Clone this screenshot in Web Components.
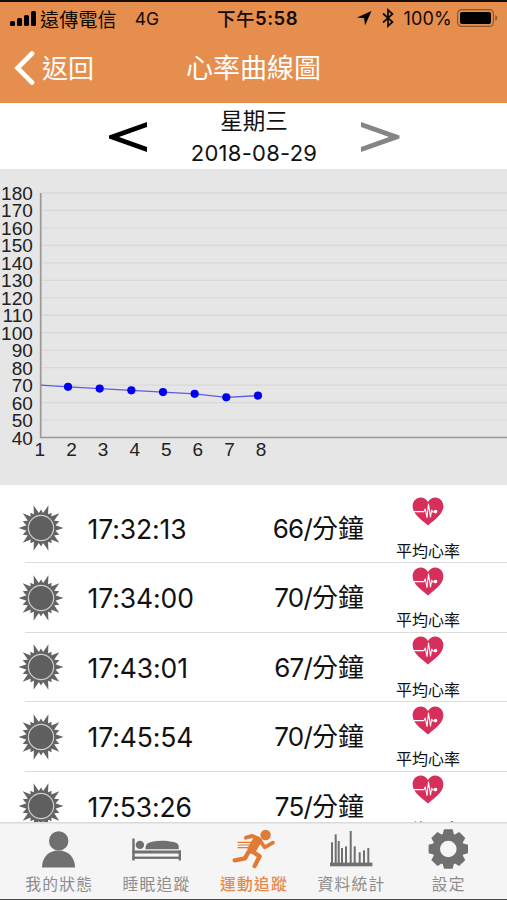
<!DOCTYPE html>
<html lang="zh-Hant">
<head>
<meta charset="utf-8">
<meta name="viewport" content="width=device-width, initial-scale=1">
<title>心率曲線圖</title>
<style>
  html, body { margin: 0; height: 100%; }
  body { overflow: hidden; background: #fff; font-family: Inter, "Noto Sans CJK TC", sans-serif; }
</style>
</head>
<body>
<heart-rate-page></heart-rate-page>

<script>
// create an element class from a markup function
function define(name, tmpl) {
  customElements.define(name, class extends HTMLElement {
    connectedCallback() {
      if (this.shadowRoot) return
      this.attachShadow({ mode: 'open' }).innerHTML = tmpl(this)
    }
  })
}

const points = (list) => list.map(p => p.map(n => n.toFixed(2)).join(',')).join(' ')
const polar = (cx, cy, r, deg) => [cx + r * Math.cos(deg * Math.PI / 180), cy - r * Math.sin(deg * Math.PI / 180)]

// ---- status bar ----
define('status-bar', () => `
  <style>
    :host { display: grid; grid-template-columns: 207px 1fr auto; align-items: center; height: 32px; padding: 0 9px 0 10px; box-sizing: border-box; color: #110a05; font-size: 17px; white-space: nowrap; }
    div { display: flex; align-items: center; }
    svg { display: block; flex: none; }
    .carrier { margin: 0 18px 0 4px; letter-spacing: 0.2px; font-size: 19px; }
    .net { font-size: 17.5px; }
    .time { font-weight: 600; font-size: 18.5px; letter-spacing: 0.5px; }
    .time span { font-weight: 500; }
    .pct { margin: 0 5px 0 9px; font-size: 18px; letter-spacing: 0.2px; }
  </style>
  <div>
    <svg width="26" height="17" viewBox="0 0 26 17">
      <rect x="0" y="11" width="5" height="5" rx="1.5"/><rect x="7" y="8" width="5" height="8" rx="1.5"/>
      <rect x="14" y="5" width="5" height="11" rx="1.5"/><rect x="21" y="1" width="5" height="15" rx="1.5"/>
    </svg>
    <span class="carrier">遠傳電信</span><span class="net">4G</span>
  </div>
  <div class="time"><span>下午</span>5:58</div>
  <div>
    <svg width="15" height="16" viewBox="0 0 15 16"><path d="M14.5 1 8 15.5 7.2 8.3 0 7.6z"/></svg>
    <svg style="margin-left:10px" width="12" height="20" viewBox="0 0 12 20"><path d="M1 5.5 10.5 14 6 18V2l4.5 4L1 14.5" fill="none" stroke="#110a05" stroke-width="1.7"/></svg>
    <span class="pct">100%</span>
    <svg width="41" height="18" viewBox="0 0 41 18">
      <rect x=".6" y=".6" width="35.8" height="16.8" rx="4" fill="none" stroke="#8b582f" stroke-width="1.2"/>
      <rect x="3" y="3" width="31" height="12" rx="2" fill="#000"/>
      <path d="M38.3 6v6q2-1 2-3t-2-3z" fill="#8b582f"/>
    </svg>
  </div>
`)

// ---- title bar ----
define('nav-bar', () => `
  <style>
    :host { display: grid; grid-template-columns: 1fr auto 1fr; align-items: center; height: 68px; padding: 0 14px; color: #fff; font-size: 27px; line-height: 68px; }
    .back { display: flex; align-items: center; gap: 7px; font-size: 26px; }
    .back svg { margin-top: -2px; }
    .text { padding-top: 1px; }
  </style>
  <div class="back">
    <svg width="21" height="34" viewBox="0 0 21 34"><path d="M18 2.5 3.5 17 18 31.5" fill="none" stroke="#fff" stroke-width="4.6" stroke-linecap="round"/></svg>
    <span class="text"><slot name="back"></slot></span>
  </div>
  <div class="text"><slot></slot></div>
`)

// ---- previous / next day ----
define('date-picker', () => `
  <style>
    :host { display: grid; grid-template-columns: 39px 1fr 39px; align-items: center; height: 66px; padding: 0 107px 0 108px; background: #fff; color: #111; }
    svg { display: block; padding-top: 2px; }
    .mid { text-align: center; }
    .day { font-size: 22.5px; line-height: 33px; }
    .date { font-size: 22px; line-height: 32px; letter-spacing: 0.25px; }
  </style>
  <svg width="39" height="32" viewBox="0 0 39 32"><path d="M39 1V6L11 16l28 10v5L1 17.6V14.4z" fill="#000"/></svg>
  <div class="mid">
    <div class="day"><slot name="day"></slot></div>
    <div class="date"><slot name="date"></slot></div>
  </div>
  <svg width="39" height="32" viewBox="0 0 39 32"><path d="M0 1V6L28 16 0 26v5L38.5 17.6V14.4z" fill="#858585"/></svg>
`)

// ---- line chart, values="70,69,..." ----
define('rate-chart', (el) => {
  const values = el.getAttribute('values').split(',').map(Number)
  const y = v => 268.5 - (v - 40) * 1.7464
  const x = i => 36.4 + i * 31.65
  let grid = '', labels = '', dots = ''
  for (let v = 180; v >= 40; v -= 10) {
    if (v > 40) grid += `<line x1="42" x2="507" y1="${y(v)}" y2="${y(v)}"/>`
    labels += `<text x="32.8" y="${y(v) + 7}" text-anchor="end">${v}</text>`
  }
  values.forEach((v, i) => {
    labels += `<text x="${39.9 + i * 31.6}" y="287" text-anchor="middle">${i + 1}</text>`
    if (i > 0) dots += `<circle cx="${x(i)}" cy="${y(v)}" r="4.1"/>`
  })
  const line = values.map((v, i) => [i ? x(i) : 41, y(v)])
  return `
  <style>
    :host { display: block; height: 316px; background: #e6e6e6; }
    svg { display: block; }
    text { font: 19px "Liberation Sans", sans-serif; fill: #222; }
  </style>
  <svg width="507" height="316" viewBox="0 0 507 316">
    <g stroke="#d8d8d8" stroke-width="1.3">${grid}</g>
    <path d="M40.7 24V268.5H507" fill="none" stroke="#999" stroke-width="1.7"/>
    ${labels}
    <polyline points="${points(line)}" fill="none" stroke="#5c5ce6" stroke-width="1.4"/>
    <g fill="#0000f0">${dots}</g>
  </svg>`
})

// ---- icons ----
define('sun-icon', () => {
  // angle and length of every ray, first quadrant then mirrored
  const quarter = [[0, 22.5], [20, 19.5], [39, 23.5], [55, 18.5], [72, 24]]
  let rays = []
  quarter.forEach(([a, r]) => {
    rays.push([a, r], [180 - a, r])
    if (a) rays.push([-a, r], [180 + a, r])
  })
  rays.push([90, 18.5], [270, 18.5])
  const spikes = rays.map(([a, r]) =>
    `<polygon points="${points([polar(24, 24, 14, a - 12), polar(24, 24, r, a), polar(24, 24, 14, a + 12)])}"/>`).join('')
  return `
  <style>:host { display: block; } svg { display: block; }</style>
  <svg width="48" height="48" viewBox="0 0 48 48" fill="#636363">
    ${spikes}<circle cx="24" cy="24" r="14.5"/>
    <circle cx="24" cy="24" r="12.6" fill="#605f5f" stroke="#cfcfcf" stroke-width="1.2"/>
  </svg>`
})

define('heart-icon', () => `
  <style>:host { display: block; } svg { display: block; }</style>
  <svg width="32" height="29" viewBox="0 0 32 29">
    <path d="M16 28.5C12 24.5.6 18 .6 9.2.6 4 4.2.5 8.6.5c3.3 0 6 1.7 7.4 4.6C17.4 2.2 20.1.5 23.4.5c4.4 0 8 3.5 8 8.7C31.4 18 20 24.5 16 28.5z" fill="#d62f5c"/>
    <path d="M2 14.6h10l1.3-2.6 1.7 8.5 1.5-13.5 2 13 1.2-7 1 2h3" fill="none" stroke="#fff" stroke-width="1.1" stroke-linejoin="round"/>
    <circle cx="23.5" cy="14.6" r="1.8" fill="#fff"/>
  </svg>
`)

// ---- one measurement ----
define('rate-row', (el) => `
  <style>
    :host { display: grid; grid-template-columns: 71px 149.5px 127px 128px; align-items: center; height: 69.5px; box-sizing: border-box; padding-left: 16.5px; color: #111; font-size: 26.5px; white-space: nowrap; line-height: 30px;
      background: linear-gradient(#dcdcdc, #dcdcdc) 25px 100% / 100% 1.2px no-repeat; }
    sun-icon { margin-top: -1px; }
    .time { letter-spacing: -0.1px; }
    .rate { text-align: right; font-size: 26px; }
    .num { letter-spacing: -0.8px; }
    .avg { display: flex; flex-direction: column; align-items: center; font-size: 16px; line-height: 20px; gap: 14.5px; }
  </style>
  <sun-icon></sun-icon>
  <div class="time">${el.getAttribute('time')}</div>
  <div class="rate"><span class="num">${el.getAttribute('rate')}/</span>分鐘</div>
  <div class="avg"><heart-icon></heart-icon><span><slot></slot></span></div>
`)

// ---- tab bar ----
const bars = [[237, 247], [248, 223], [257, 243], [267, 264], [279, 259], [293, 213], [305, 259], [320, 277], [333, 271], [346, 264]]
const teeth = [0, 45, 90, 135, 180, 225, 270, 315]
const icons = {
  user: `<circle cx="29.7" cy="18.9" r="9.7"/><path d="M13 45.5C13 35 20 28.5 29.5 28.5S46 35 46 45.5z"/>`,
  bed: `<rect x="6.3" y="16.5" width="2.4" height="22"/><circle cx="13.9" cy="22.9" r="4.2"/>
    <path d="M19.6 27.2C19 22 22 20.5 27 19.5c7-1.3 16-.8 21.5.8 4 1.2 4.5 3.2 4.2 6.9z"/>
    <rect x="6.3" y="28.5" width="48.7" height="3"/><rect x="6.3" y="34.6" width="48.7" height="2.3"/><rect x="52.6" y="28.5" width="2.4" height="10"/>`,
  run: `<g transform="translate(1.3 0) scale(.3333)"><circle cx="124" cy="39" r="15.5"/>
    <g fill="none" stroke="currentColor" stroke-linecap="round" stroke-linejoin="round">
      <path d="M65 47 84 42 108 54" stroke-width="12"/><path d="M98 56 83 82" stroke-width="27"/>
      <path d="M106 54 121 76 146 62" stroke-width="11"/><path d="M82 87 106 103 91 132" stroke-width="13"/>
      <path d="M72 91 62 109 31 115" stroke-width="13"/><path d="M41 61H82M41 69H76M41 77H70" stroke-width="3.5"/>
    </g></g>`,
  stats: bars.map(([x, y]) => `<rect x="${(x / 3 - 69).toFixed(1)}" y="${(y / 3 - 62).toFixed(1)}" width="2" height="${(103 - y / 3).toFixed(1)}"/>`).join('') + `<rect x="9" y="40.6" width="42.4" height="3.7"/>`,
  gear: `<g transform="translate(30.3 27)">${teeth.map(a => `<path transform="rotate(${a})" d="M-5.8-14-4.3-19.7H4.3L5.8-14z"/>`).join('')}
    <path fill-rule="evenodd" d="M-15.8 0a15.8 15.8 0 1 0 31.6 0a15.8 15.8 0 1 0-31.6 0zM-8.3 0a8.3 8.3 0 1 0 16.6 0a8.3 8.3 0 1 0-16.6 0z"/></g>`
}

define('tab-item', (el) => `
  <style>
    :host { display: flex; flex-direction: column; align-items: center; color: #707070; }
    :host([active]) { color: #e07a35; }
    svg { display: block; }
    span { font-size: 15.8px; line-height: 25px; letter-spacing: 1.2px; margin-right: -1px; color: #8c8c8c; }
    :host([active]) span { color: #e38a4e; font-weight: 500; }
  </style>
  <svg width="60" height="50" viewBox="0 0 60 50" fill="currentColor">${icons[el.getAttribute('icon')]}</svg>
  <span><slot></slot></span>
`)

define('tab-bar', () => `
  <style>
    :host { display: grid; grid-template-columns: repeat(5, 1fr); height: 77px; padding: 0 10px; background: #f5f5f5; box-shadow: inset 0 1.5px #d9d9d9; border-bottom: 1px solid #444; }
  </style>
  <slot></slot>
`)

// ---- page ----
const rows = [['17:32:13', 66], ['17:34:00', 70], ['17:43:01', 67], ['17:45:54', 70], ['17:53:26', 75]]

define('heart-rate-page', () => `
  <style>
    :host { display: flex; flex-direction: column; width: 507px; height: 900px; overflow: hidden; }
    header { background: #e58e4e; border-top: 2px solid #150b04; height: 101px; flex: none; }
    main { flex: 1; min-height: 0; overflow: hidden; padding-top: 9px; background: #fff; }
    date-picker, rate-chart, tab-bar { flex: none; }
  </style>
  <header>
    <status-bar></status-bar>
    <nav-bar><span slot="back">返回</span>心率曲線圖</nav-bar>
  </header>
  <date-picker><span slot="day">星期三</span><span slot="date">2018-08-29</span></date-picker>
  <rate-chart values="70,69,68,67,66,65,63,64"></rate-chart>
  <main>
    ${rows.map(([time, rate]) => `<rate-row time="${time}" rate="${rate}">平均心率</rate-row>`).join('')}
  </main>
  <tab-bar>
    <tab-item icon="user">我的狀態</tab-item>
    <tab-item icon="bed">睡眠追蹤</tab-item>
    <tab-item icon="run" active>運動追蹤</tab-item>
    <tab-item icon="stats">資料統計</tab-item>
    <tab-item icon="gear">設定</tab-item>
  </tab-bar>
`)
</script>
</body>
</html>
